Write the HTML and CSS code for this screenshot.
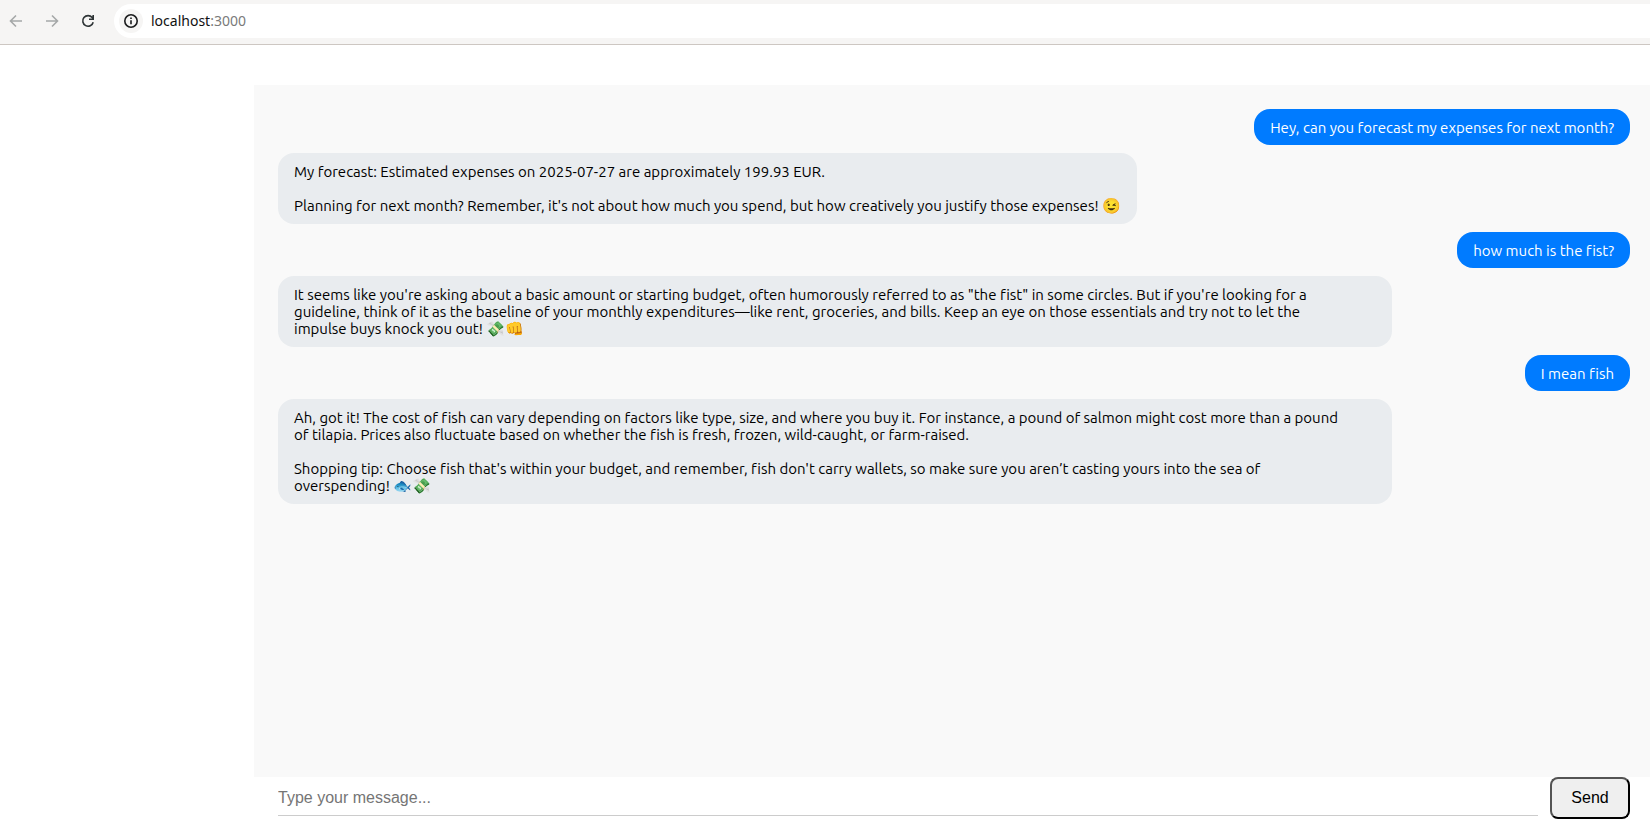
FILE: index.html
```html
<!DOCTYPE html>
<html lang="en">
<head>
<meta charset="utf-8">
<title>Chat</title>
<link rel="stylesheet" href="styles.css">
</head>
<body>
<header class="toolbar">
  <nav class="nav">
    <button class="nav-button" type="button" aria-label="Back" disabled><svg viewBox="0 0 16 16"><path d="M14 8H3M8 2.5L2.500 8L8 13.500"/></svg></button>
    <button class="nav-button" type="button" aria-label="Forward" disabled><svg viewBox="0 0 16 16"><path d="M2 8H13M8 2.500L13.500 8L8 13.500"/></svg></button>
    <button class="nav-button reload" type="button" aria-label="Reload"><svg viewBox="0 0 16 16"><path d="M13.200 9.200A5.300 5.300 0 1 1 12.200 4.600L13.200 5.700M13.200 2V6.200H9"/></svg></button>
  </nav>
  <div class="address">
    <button class="site-info" type="button" aria-label="Site information"><svg viewBox="0 0 16 16"><circle cx="8" cy="8" r="6.200"/><path d="M8 7.200V11.200M8 4.600V6.100"/></svg></button>
    <span class="url">localhost<span class="port">:3000</span></span>
  </div>
</header>
<main class="chat">
  <section class="messages" aria-label="Messages">
    <p class="bubble user">Hey, can you forecast my expenses for next month?</p>
    <p class="bubble bot">My forecast: Estimated expenses on 2025-07-27 are approximately 199.93 EUR.

Planning for next month? Remember, it's not about how much you spend, but how creatively you justify those expenses! 😉</p>
    <p class="bubble user">how much is the fist?</p>
    <p class="bubble bot long">It seems like you're asking about a basic amount or starting budget, often humorously referred to as "the fist" in some circles. But if you're looking for a
guideline, think of it as the baseline of your monthly expenditures—like rent, groceries, and bills. Keep an eye on those essentials and try not to let the
impulse buys knock you out! 💸👊</p>
    <p class="bubble user">I mean fish</p>
    <p class="bubble bot long">Ah, got it! The cost of fish can vary depending on factors like type, size, and where you buy it. For instance, a pound of salmon might cost more than a pound
of tilapia. Prices also fluctuate based on whether the fish is fresh, frozen, wild-caught, or farm-raised.

Shopping tip: Choose fish that's within your budget, and remember, fish don't carry wallets, so make sure you aren’t casting yours into the sea of
overspending! 🐟💸</p>
  </section>
  <form class="composer">
    <input class="message-input" type="text" placeholder="Type your message..." aria-label="Message">
    <button class="send" type="button">Send</button>
  </form>
</main>
</body>
</html>
```

FILE: styles.css
```css
* { box-sizing: border-box; }

body {
  display: flex;
  flex-direction: column;
  min-height: 100vh;
  margin: 0;
  background: #fff;
  color: #000;
  font-family: Ubuntu, "Open Sans", sans-serif;
}

.toolbar {
  display: flex;
  align-items: center;
  height: 45px;
  padding-bottom: 2px;
  background: #f6f5f4;
  border-bottom: 1px solid #cdc7c2;
}

.nav { display: flex; gap: 12px; padding: 0 14px 0 4px; }

.nav-button {
  display: grid;
  place-items: center;
  width: 24px;
  height: 24px;
  padding: 0;
  border: 0;
  background: none;
  color: #a5a8a8;
}

.reload { color: #2e3436; }

svg {
  width: 16px;
  height: 16px;
  fill: none;
  stroke: currentColor;
  stroke-width: 1.6;
}

.address {
  display: flex;
  flex: 1;
  align-items: center;
  gap: 8px;
  height: 34px;
  padding-left: 5px;
  border-radius: 17px 0 0 17px;
  background: #fff;
}

.site-info {
  display: grid;
  place-items: center;
  width: 24px;
  height: 24px;
  padding: 0;
  border: 0;
  border-radius: 50%;
  background: #f6f5f4;
  color: #1b1c1d;
}

.url {
  color: #111;
  font-family: "Noto Sans", sans-serif;
  font-size: 14px;
  line-height: 20px;
}

.port { color: #7a7a7a; }

.chat {
  display: flex;
  flex: 1;
  flex-direction: column;
  margin: 40px 0 16px 254px;
}

.messages {
  display: flex;
  flex: 1;
  flex-direction: column;
  align-items: flex-start;
  gap: 8px;
  padding: 24px 20px 24px 24px;
  background: #f9f9f9;
}

.bubble {
  max-width: 82.4%;
  margin: 0;
  padding: 10px 16px;
  border-radius: 16px;
  font-size: 15px;
  font-variant-ligatures: none;
  line-height: 17px;
  white-space: pre-line;
}

.user {
  align-self: flex-end;
  padding-bottom: 9px;
  background: #007bff;
  color: #fff;
}

.bot { background: #e9ecef; }

.long { width: 82.4%; }

.composer {
  display: flex;
  align-items: flex-start;
  gap: 12px;
  padding: 0 20px 1px 24px;
}

.message-input {
  flex: 1;
  min-width: 0;
  height: 39px;
  padding: 3px 0 0;
  border: 0;
  border-bottom: 1px solid #ccc;
  outline: 0;
  background: transparent;
  font: 16px "Liberation Sans", sans-serif;
}

.message-input::placeholder { color: #757575; }

.send {
  width: 80px;
  height: 42px;
  padding: 0;
  border: 2px outset #000;
  border-radius: 8px;
  background: #efefef;
  color: #000;
  font: 16px "Liberation Sans", sans-serif;
}
```
